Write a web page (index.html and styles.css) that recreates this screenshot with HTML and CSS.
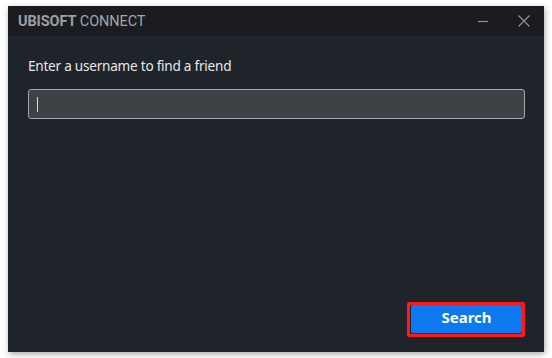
FILE: index.html
```html
<!DOCTYPE html>
<html>
<head>
<meta charset="utf-8">
<link rel="stylesheet" href="styles.css">
</head>
<body>
<div class="window">
  <div class="titlebar">
    <div class="title"><b>UBISOFT</b> CONNECT</div>
    <div class="controls">
      <svg class="ctl min" width="12" height="12" viewBox="0 0 12 12"><path d="M1 6.5H11" stroke="#8e9196" stroke-width="1.2"/></svg>
      <svg class="ctl close" width="14" height="14" viewBox="0 0 14 14"><path d="M1.5 1.5L12.5 12.5M12.5 1.5L1.5 12.5" stroke="#8e9196" stroke-width="1.2"/></svg>
    </div>
  </div>
  <div class="content">
    <label class="label" for="user">Enter a username to find a friend</label>
    <div class="input"><span class="caret"></span></div>
    <div class="spacer"></div>
    <div class="actions">
      <div class="highlight"><button class="search">Search</button></div>
    </div>
  </div>
</div>
</body>
</html>
```
FILE: styles.css
```css
html, body { margin: 0; padding: 0; background: #ffffff; }
body { padding: 6px 8px 6px 8px; width: 552px; height: 358px; box-sizing: border-box; }
.window {
  width: 536px; height: 346px;
  display: flex; flex-direction: column;
  background: #1f232a;
  box-shadow: 1px 2px 6px rgba(0,0,0,0.35);
}
.titlebar {
  height: 30px; background: #1a1c20;
  display: flex; align-items: center; justify-content: space-between;
  padding: 0 13px 0 10px;
}
.title {
  font-family: Roboto, "Liberation Sans", sans-serif;
  font-size: 14.5px; color: #a2a5aa; letter-spacing: -0.1px;
}
.title b { font-weight: 700; color: #9c9fa4; }
.controls { display: flex; align-items: center; gap: 28px; }
.ctl { display: block; }
.content {
  flex: 1; display: flex; flex-direction: column;
  padding: 20px 19px 15px 20px;
}
.label {
  font-family: "Noto Sans", sans-serif; font-size: 13.6px; color: #e6e7e9;
  line-height: 20px; letter-spacing: -0.25px;
}
.input {
  margin-top: 13px; height: 30px; box-sizing: border-box;
  border: 1px solid #a4a7ab; border-radius: 3px; background: #3e4246;
  display: flex; align-items: center; padding-left: 8px;
}
.caret { width: 1px; height: 15px; background: #d8d9db; }
.spacer { flex: 1; }
.actions { display: flex; justify-content: flex-end; }
.highlight { border: 3px solid #ff1a1a; border-radius: 2px; padding: 0; }
.search {
  display: block; width: 111px; height: 29px; border: 0; border-radius: 2px;
  background: #0e78f0; color: #ffffff; margin: 0 0 0 1px;
  font-family: "Noto Sans", sans-serif; font-weight: 700; font-size: 15px;
  line-height: 20px;
  box-shadow: inset 0 -1px 0 #1a3a66;
  padding: 0 0 6px 0;
}
```
